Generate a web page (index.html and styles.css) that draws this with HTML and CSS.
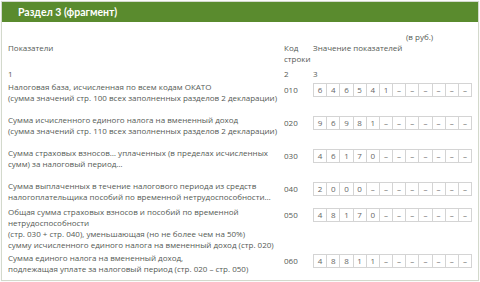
FILE: index.html
```html
<!DOCTYPE html>
<html lang="ru">
<head>
<meta charset="utf-8">
<link rel="stylesheet" href="styles.css">
</head>
<body>
<div class="panel">
  <div class="head">Раздел 3 (фрагмент)</div>
  <div class="body">
    <div class="unit">(в руб.)</div>
    <div class="row row-head">
      <div class="lbl">Показатели</div>
      <div class="code">Код<br>строки</div>
      <div class="val">Значение показателей</div>
    </div>
    <div class="row row-num">
      <div class="lbl">1</div>
      <div class="code">2</div>
      <div class="val">3</div>
    </div>
    <div class="row">
      <div class="lbl">Налоговая база, исчисленная по всем кодам ОКАТО<br>(сумма значений стр. 100 всех заполненных разделов 2 декларации)</div>
      <div class="code">010</div>
      <div class="cells"><span>6</span><span>4</span><span>6</span><span>5</span><span>4</span><span>1</span><span>–</span><span>–</span><span>–</span><span>–</span><span>–</span><span>–</span></div>
    </div>
    <div class="row">
      <div class="lbl">Сумма исчисленного единого налога на вмененный доход<br>(сумма значений стр. 110 всех заполненных разделов 2 декларации)</div>
      <div class="code">020</div>
      <div class="cells"><span>9</span><span>6</span><span>9</span><span>8</span><span>1</span><span>–</span><span>–</span><span>–</span><span>–</span><span>–</span><span>–</span><span>–</span></div>
    </div>
    <div class="row">
      <div class="lbl">Сумма страховых взносов… уплаченных (в пределах исчисленных<br>сумм) за налоговый период…</div>
      <div class="code">030</div>
      <div class="cells"><span>4</span><span>6</span><span>1</span><span>7</span><span>0</span><span>–</span><span>–</span><span>–</span><span>–</span><span>–</span><span>–</span><span>–</span></div>
    </div>
    <div class="row row-tight">
      <div class="lbl">Сумма выплаченных в течение налогового периода из средств<br>налогоплательщика пособий по временной нетрудоспособности…</div>
      <div class="code">040</div>
      <div class="cells"><span>2</span><span>0</span><span>0</span><span>0</span><span>–</span><span>–</span><span>–</span><span>–</span><span>–</span><span>–</span><span>–</span><span>–</span></div>
    </div>
    <div class="row row-tighter">
      <div class="lbl">Общая сумма страховых взносов и пособий по временной<br>нетрудоспособности<br>(стр. 030 + стр. 040), уменьшающая (но не более чем на 50%)<br>сумму исчисленного единого налога на вмененный доход (стр. 020)</div>
      <div class="code">050</div>
      <div class="cells"><span>4</span><span>8</span><span>1</span><span>7</span><span>0</span><span>–</span><span>–</span><span>–</span><span>–</span><span>–</span><span>–</span><span>–</span></div>
    </div>
    <div class="row">
      <div class="lbl">Сумма единого налога на вмененный доход,<br>подлежащая уплате за налоговый период (стр. 020 – стр. 050)</div>
      <div class="code">060</div>
      <div class="cells"><span>4</span><span>8</span><span>8</span><span>1</span><span>1</span><span>–</span><span>–</span><span>–</span><span>–</span><span>–</span><span>–</span><span>–</span></div>
    </div>
  </div>
</div>
</body>
</html>
```
FILE: styles.css
```css
* { box-sizing: border-box; }
html, body { margin: 0; padding: 0; background: #ffffff; }
body {
  padding: 1px;
  font-family: "Open Sans", "Noto Sans", sans-serif;
  color: #555a55;
}
.panel {
  width: 478px;
  height: 280px;
  border: 1px solid #d3d9cc;
  box-shadow: 0 0 1px rgba(0,0,0,0.1);
  background: #fff;
  overflow: hidden;
}
.head {
  height: 20px;
  background: #5a8b2e;
  color: #ffffff;
  font-family: Lato, "Open Sans", sans-serif;
  font-weight: 700;
  font-size: 10.5px;
  line-height: 21px;
  padding-left: 16px;
}
.body {
  padding: 9px 0 0 6px;
  font-size: 8px;
  line-height: 11px;
}
.unit {
  padding-left: 398px;
  height: 11px;
}
.row {
  display: grid;
  grid-template-columns: 276px 29px 159px;
  margin-bottom: 11px;
}
.row-head { margin-bottom: 4px; }
.row-num { margin-bottom: 2px; }
.row-tight { margin-bottom: 4px; }
.row-tighter { margin-bottom: 2px; }
.code { padding-top: 3px; }
.row-head .code, .row-num .code { padding-top: 0; }
.cells {
  display: grid;
  grid-template-columns: repeat(12, 1fr);
  height: 14px;
  margin-top: 2px;
  border-left: 1px solid #d4d4d4;
}
.cells span {
  border: 1px solid #d4d4d4;
  border-left: 0;
  text-align: center;
  line-height: 12px;
  font-size: 8px;
  color: #666;
}
```
